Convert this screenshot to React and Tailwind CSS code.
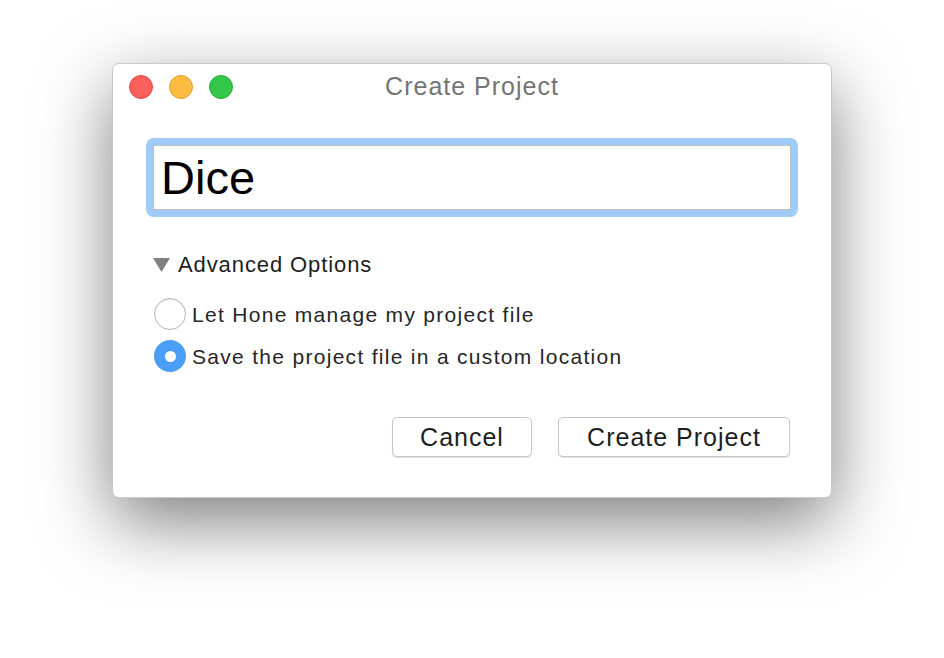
import React from 'react';

const font = { fontFamily: '"Liberation Sans", Arial, sans-serif' };

const TrafficLights = () => (
  <div className="flex items-center gap-[16px]">
    <span className="w-[24px] h-[24px] rounded-full bg-[#fc605c] border border-[#de4a45]" />
    <span className="w-[24px] h-[24px] rounded-full bg-[#fdbc40] border border-[#dea035]" />
    <span className="w-[24px] h-[24px] rounded-full bg-[#34c84a] border border-[#27a93a]" />
  </div>
);

const Radio = ({ checked, label }) => (
  <div className="flex items-center gap-[6px] h-[42px]">
    {checked ? (
      <span className="w-[32px] h-[32px] rounded-full bg-[#4a9ef8] flex items-center justify-center">
        <span className="w-[11px] h-[11px] rounded-full bg-white" />
      </span>
    ) : (
      <span className="w-[32px] h-[32px] rounded-full bg-white border border-[#b4b4b4] shadow-[inset_0_1px_1px_rgba(0,0,0,0.08)]" />
    )}
    <span className="text-[21px] leading-none text-[#262626] tracking-[1.3px]">{label}</span>
  </div>
);

export default function App() {
  return (
    <div className="min-h-[658px] bg-white pt-[63px]" style={font}>
      <div className="mx-auto w-[720px] h-[435px] bg-white rounded-[7px] border border-[#c9c9c9] shadow-[0_24px_70px_rgba(0,0,0,0.5)] flex flex-col">
        <div className="relative h-[46px] flex items-center px-[16px]">
          <TrafficLights />
          <div className="absolute inset-x-0 top-0 h-[46px] flex items-center justify-center text-[25px] tracking-[1px] text-[#747474] pointer-events-none">
            Create Project
          </div>
        </div>

        <div className="px-[33px] pt-[28px]">
          <div className="rounded-[8px] bg-[#9fcdf7] p-[7px]">
            <div className="bg-white border border-[#bdbdbd] h-[65px] flex items-center pl-[7px]">
              <span className="text-[47px] text-black leading-none">Dice</span>
            </div>
          </div>

          <div className="flex items-center gap-[8px] mt-[34px] h-[28px] pl-[7px]">
            <svg width="17" height="14" viewBox="0 0 17 14">
              <polygon points="0,0 17,0 8.5,14" fill="#808080" />
            </svg>
            <span className="text-[22px] leading-none text-[#1e1e1e] tracking-[0.9px]">Advanced Options</span>
          </div>

          <div className="mt-[14px] pl-[8px] flex flex-col">
            <Radio label="Let Hone manage my project file" />
            <Radio checked label="Save the project file in a custom location" />
          </div>

          <div className="flex justify-end gap-[26px] mt-[40px] pr-[8px]">
            <button className="w-[140px] h-[40px] rounded-[5px] bg-white border border-[#c8c8c8] shadow-[0_1px_1px_rgba(0,0,0,0.12)] text-[25px] tracking-[1px] leading-none text-[#1e1e1e]">
              Cancel
            </button>
            <button className="w-[232px] h-[40px] rounded-[5px] bg-white border border-[#c8c8c8] shadow-[0_1px_1px_rgba(0,0,0,0.12)] text-[25px] tracking-[1px] leading-none text-[#1e1e1e]">
              Create Project
            </button>
          </div>
        </div>
      </div>
    </div>
  );
}
